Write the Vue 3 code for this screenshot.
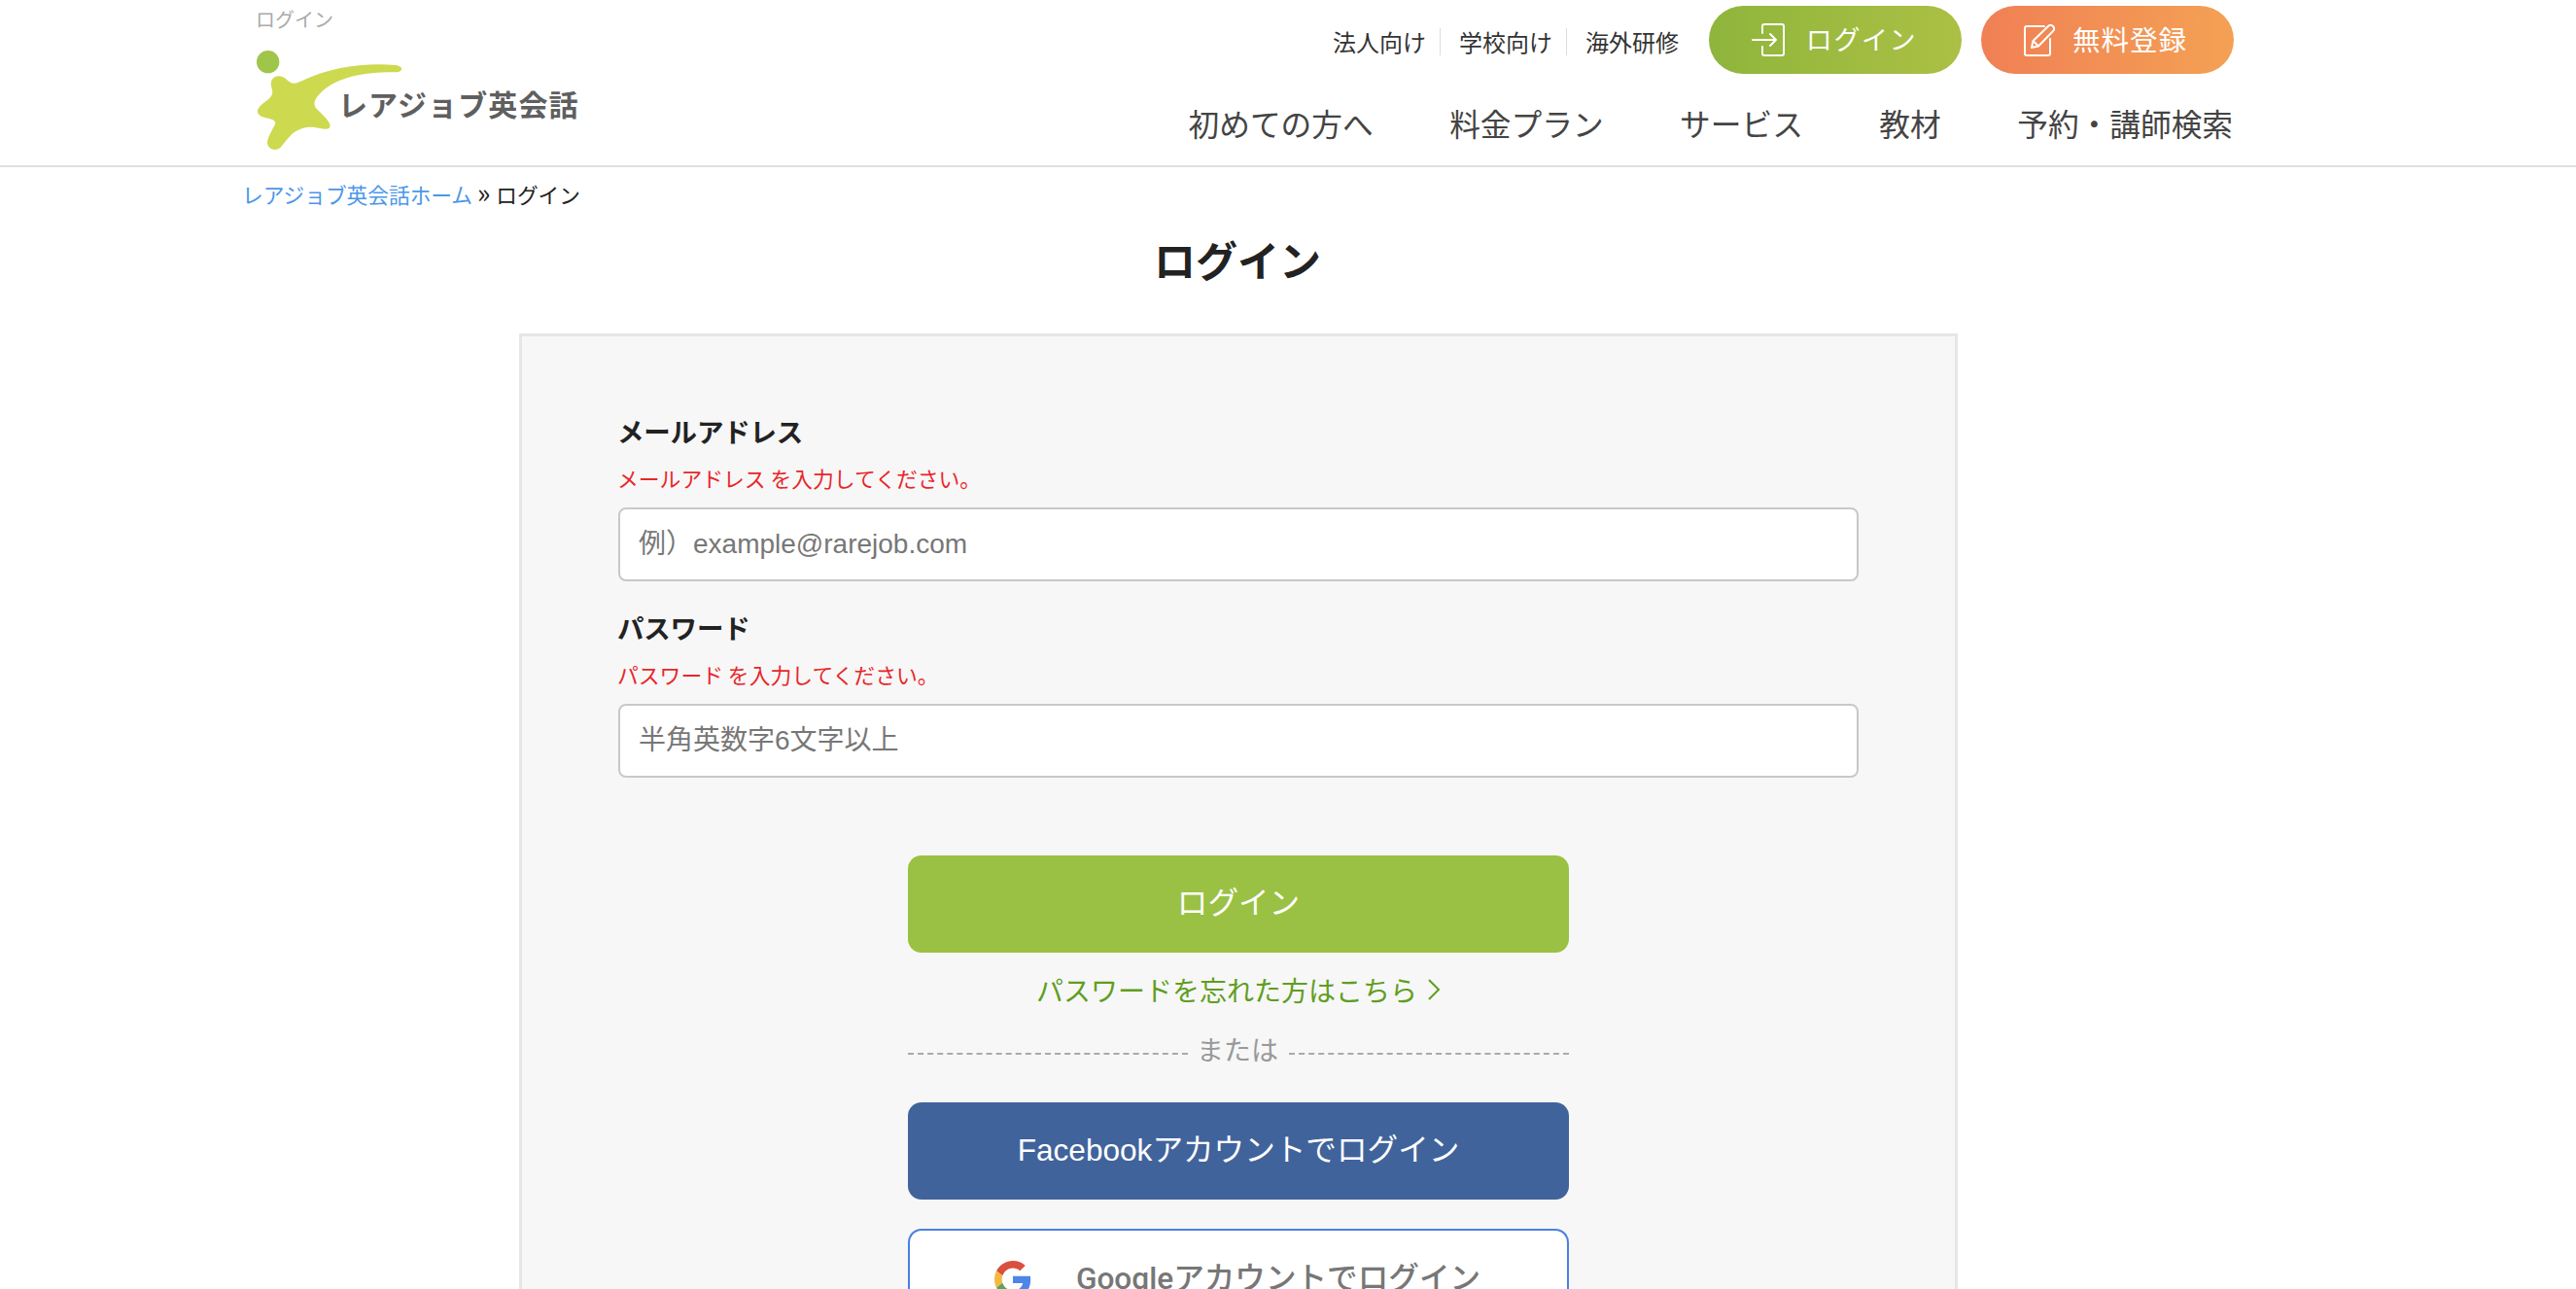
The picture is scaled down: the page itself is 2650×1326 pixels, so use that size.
<script setup>
const nav = ['初めての方へ', '料金プラン', 'サービス', '教材', '予約・講師検索']
const sub = ['法人向け', '学校向け', '海外研修']
</script>

<template>
  <div class="page">
    <header class="header">
      <div class="header-inner">
        <div class="brand">
          <p class="tagline">ログイン</p>
          <div class="logo">
            <svg class="logo-mark" viewBox="60 140 480 330" width="160" height="110" aria-hidden="true">
              <circle cx="107" cy="190" r="35" fill="#9fc54a" />
              <path fill="#cdd94f" d="M118 247C128 230 150 230 165 245C178 258 190 259 208 250C300 205 410 192 500 200C525 203 526 218 505 222C420 220 330 232 275 280C250 302 244 320 258 336C272 350 290 366 298 382C302 396 288 400 272 396C235 386 205 392 180 414C165 428 155 445 145 455C128 468 105 458 105 438C108 418 122 398 130 380C130 368 115 366 98 362C78 358 68 345 80 330C95 312 112 308 120 290C124 275 112 262 118 247Z" />
            </svg>
            <span class="logo-text">レアジョブ英会話</span>
          </div>
        </div>
        <div class="header-right">
          <div class="top-row">
            <ul class="sub-links">
              <li v-for="s in sub" :key="s">{{ s }}</li>
            </ul>
            <a class="pill pill-green">
              <svg viewBox="0 0 34 34" width="34" height="34" fill="none" stroke="#fff" stroke-width="2" stroke-linecap="round" stroke-linejoin="round" aria-hidden="true">
                <path d="M11 10V3a2 2 0 0 1 2-2h18a2 2 0 0 1 2 2v28a2 2 0 0 1-2 2H13a2 2 0 0 1-2-2v-7" />
                <path d="M1 17h24M19 11l6 6-6 6" />
              </svg>
              <span>ログイン</span>
            </a>
            <a class="pill pill-orange">
              <svg viewBox="0 0 33 33" width="33" height="33" fill="none" stroke="#fff" stroke-width="2" stroke-linecap="round" stroke-linejoin="round" aria-hidden="true">
                <path d="M21 2H3a2 2 0 0 0-2 2v26a2 2 0 0 0 2 2h22a2 2 0 0 0 2-2V15" />
                <path d="M8 24l1.500-7L25 2c1.500-1.500 3.500-1.500 5 0s1.500 3.500 0 5L15 22.500zM9.500 17l5.500 5.500" />
              </svg>
              <span>無料登録</span>
            </a>
          </div>
          <nav class="nav">
            <a v-for="n in nav" :key="n">{{ n }}</a>
          </nav>
        </div>
      </div>
    </header>

    <main class="main">
      <div class="crumbs"><a>レアジョブ英会話ホーム</a> <span class="raquo">»</span> <span class="here">ログイン</span></div>
      <h1 class="title">ログイン</h1>
      <section class="card">
        <div class="field">
          <label>メールアドレス</label>
          <p class="error">メールアドレス を入力してください。</p>
          <input type="text" placeholder="例）example@rarejob.com" />
        </div>
        <div class="field">
          <label>パスワード</label>
          <p class="error">パスワード を入力してください。</p>
          <input type="text" placeholder="半角英数字6文字以上" />
        </div>
        <div class="actions">
          <button class="btn btn-login"><span>ログイン</span></button>
          <a class="forgot">パスワードを忘れた方はこちら
            <svg viewBox="0 0 14 24" width="14" height="24" fill="none" stroke="#5f9e1f" stroke-width="2" aria-hidden="true"><path d="M2 2l10 10-10 10" /></svg>
          </a>
          <div class="or"><span>または</span></div>
          <button class="btn btn-fb"><span>Facebookアカウントでログイン</span></button>
          <button class="btn btn-google">
            <svg viewBox="0 0 48 48" width="38" height="38" aria-hidden="true">
              <path fill="#D9503F" d="M24 9.500c3.500 0 6.700 1.200 9.200 3.600l6.900-6.900C35.900 2.400 30.500 0 24 0 14.600 0 6.500 5.400 2.600 13.200l8 6.200C12.500 13.700 17.800 9.500 24 9.500z" />
              <path fill="#4D86E8" d="M47 24.500c0-1.600-.1-3.100-.4-4.500H24v9h12.900c-.6 3-2.200 5.500-4.700 7.200l7.700 6C44.400 37.900 47 31.800 47 24.500z" />
              <path fill="#F4B83F" d="M10.500 28.600c-.5-1.400-.8-3-.8-4.600s.3-3.200.8-4.600l-8-6.200C.9 16.400 0 20.100 0 24s.9 7.600 2.600 10.800z" />
              <path fill="#57A65C" d="M24 48c6.500 0 11.900-2.100 15.900-5.800l-7.700-6c-2.200 1.400-4.900 2.300-8.200 2.300-6.200 0-11.500-4.200-13.400-9.900l-8 6.200C6.500 42.600 14.600 48 24 48z" />
            </svg>
            <span>Googleアカウントでログイン</span>
          </button>
        </div>
      </section>
    </main>
  </div>
</template>

<style>
html, body { margin: 0; height: 1326px; overflow: hidden; background: #fff; }
</style>

<style scoped>
.page {
  width: 2650px;
  height: 1326px;
  overflow: hidden;
  font-family: "Noto Sans CJK JP", "Liberation Sans", sans-serif;
  color: #222;
}
p, ul, h1 { margin: 0; padding: 0; }
.header {
  height: 170px;
  border-bottom: 2px solid #e0e0e0;
}
.header-inner {
  width: 2298px;
  height: 170px;
  display: flex;
  justify-content: space-between;
}
.brand { margin-left: 263px; padding-top: 6px; }
.tagline { font-size: 20px; line-height: 28px; color: #aaa; }
.logo { display: flex; align-items: flex-start; margin-top: 13px; margin-left: -3px; }
.logo-mark { display: block; flex: none; }
.logo-text {
  margin: 37px 0 0 -72px;
  font-size: 30px;
  line-height: 44px;
  font-weight: 700;
  color: #5f5f5f;
  letter-spacing: 1.100px;
  white-space: nowrap;
}
.header-right {
  display: flex;
  flex-direction: column;
  align-items: flex-end;
  padding-top: 6px;
}
.top-row { display: flex; align-items: center; }
.sub-links {
  display: flex;
  list-style: none;
  font-size: 24px;
  line-height: 28px;
  color: #333;
  margin-right: 31px;
  margin-top: 4px;
}
.sub-links li + li {
  margin-left: 14px;
  padding-left: 19px;
  border-left: 1px solid #ddd;
}
.pill {
  width: 260px;
  height: 70px;
  border-radius: 35px;
  display: flex;
  align-items: center;
  justify-content: center;
  color: #fff;
  font-size: 27px;
  letter-spacing: 1.600px;
}
.pill span { margin-top: -3px; }
.pill-green {
  background: linear-gradient(90deg, #8fb53c, #abc044);
  gap: 22px;
  padding-right: 2px;
  box-sizing: border-box;
}
.pill-orange {
  background: linear-gradient(90deg, #f08055, #f4a154);
  margin-left: 20px;
  font-size: 28.500px;
  letter-spacing: 1px;
  gap: 17px;
  padding-right: 4px;
  box-sizing: border-box;
}
.nav {
  display: flex;
  gap: 78.500px;
  margin: 27px 1px 0 0;
  font-size: 31.700px;
  line-height: 46px;
  color: #444;
}
.main { width: 2548px; }
.crumbs {
  margin-left: 249px;
  height: 43px;
  padding-top: 12px;
  font-size: 21.700px;
  line-height: 32px;
  color: #222;
}
.crumbs a { color: #4a97e8; }
.raquo { font-size: 28px; line-height: 20px; }
.here { margin-left: 1px; }
.title {
  margin-top: 7px;
  padding-right: 2px;
  text-align: center;
  font-size: 43px;
  line-height: 64px;
  font-weight: 700;
  color: #222;
}
.card {
  width: 1480px;
  height: 1400px;
  box-sizing: border-box;
  margin: 45px auto 0;
  background: #f7f7f7;
  border: 3px solid #e6e6e6;
  padding: 75px 99px 0;
}
.field + .field { margin-top: 25px; }
.field label {
  display: block;
  font-size: 27.500px;
  line-height: 44px;
  font-weight: 700;
  color: #222;
  letter-spacing: -0.2px;
  margin-left: -1px;
}
.error {
  margin-top: 12px;
  margin-left: -1px;
  font-size: 21.800px;
  line-height: 30px;
  color: #e8262a;
}
input {
  display: block;
  width: 100%;
  height: 76px;
  margin-top: 15px;
  box-sizing: border-box;
  border: 2px solid #c8c8c8;
  border-radius: 8px;
  background: #fff;
  padding: 0 19px;
  font: 28px "Liberation Sans", "Noto Sans CJK JP", sans-serif;
  outline: none;
}
input::placeholder { color: #777; opacity: 1; }
.actions {
  width: 680px;
  margin: 80px auto 0;
  display: flex;
  flex-direction: column;
  align-items: center;
}
.btn {
  width: 100%;
  height: 100px;
  border: 0;
  border-radius: 14px;
  font-family: "Liberation Sans", "Noto Sans CJK JP", sans-serif;
  font-size: 31.600px;
  display: flex;
  align-items: center;
  justify-content: center;
  color: #fff;
  padding: 0 0 8px;
}
.btn-login { background: #9ac144; }
.forgot {
  margin-top: 17px;
  display: flex;
  align-items: center;
  gap: 10px;
  font-size: 28px;
  line-height: 42px;
  color: #5f9e1f;
}
.or {
  width: 100%;
  margin-top: 21px;
  display: flex;
  align-items: center;
  gap: 10px;
  font-size: 28px;
  line-height: 42px;
  color: #999;
}
.or span { margin: -2px 1px 0 -1px; }
.or::before, .or::after {
  content: "";
  flex: 1;
  border-top: 2px dashed #aaa;
  margin-top: 7px;
}
.btn-fb { background: #41639b; margin-top: 34px; }
.btn-google {
  margin-top: 30px;
  background: #fff;
  border: 2px solid #4a7fe0;
  color: #777;
  gap: 46px;
  padding: 0 2px 0 0;
}
.btn-google svg { margin-top: 3px; }
.btn-google span { font-family: Roboto, "Noto Sans CJK JP", sans-serif; font-weight: 500; margin-top: -4px; }
</style>
